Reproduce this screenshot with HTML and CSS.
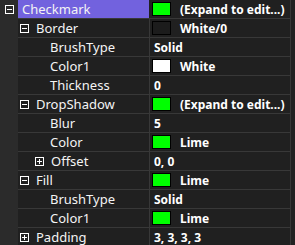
FILE: index.html
```html
<!DOCTYPE html>
<html>
<head>
<meta charset="utf-8">
<link rel="stylesheet" href="styles.css">
</head>
<body>
<div class="grid">
  <div class="gutter">
    <span class="gtoggle"><svg width="9" height="9" viewBox="0 0 9 9"><rect x="0.5" y="0.5" width="8" height="8" fill="none" stroke="#fff"/><path d="M2 4.5h5" stroke="#fff"/></svg></span>
  </div>
  <div class="rows">
    <div class="row head"><div class="name l0">Checkmark</div><div class="val"><span class="sw lime"></span>(Expand to edit...)</div></div>
    <div class="row"><div class="name l1"><span class="tg"><svg width="9" height="9" viewBox="0 0 9 9"><rect x="0.5" y="0.5" width="8" height="8" fill="none" stroke="#fff"/><path d="M2 4.5h5" stroke="#fff"/></svg></span>Border</div><div class="val"><span class="sw dark"></span>White/0</div></div>
    <div class="row"><div class="name l2">BrushType</div><div class="val">Solid</div></div>
    <div class="row"><div class="name l2">Color1</div><div class="val"><span class="sw white"></span>White</div></div>
    <div class="row"><div class="name l2">Thickness</div><div class="val">0</div></div>
    <div class="row"><div class="name l1"><span class="tg"><svg width="9" height="9" viewBox="0 0 9 9"><rect x="0.5" y="0.5" width="8" height="8" fill="none" stroke="#fff"/><path d="M2 4.5h5" stroke="#fff"/></svg></span>DropShadow</div><div class="val"><span class="sw lime"></span>(Expand to edit...)</div></div>
    <div class="row"><div class="name l2">Blur</div><div class="val">5</div></div>
    <div class="row"><div class="name l2">Color</div><div class="val"><span class="sw lime"></span>Lime</div></div>
    <div class="row"><div class="name l2b"><span class="tg"><svg width="9" height="9" viewBox="0 0 9 9"><rect x="0.5" y="0.5" width="8" height="8" fill="none" stroke="#fff"/><path d="M2 4.5h5M4.5 2v5" stroke="#fff"/></svg></span>Offset</div><div class="val">0, 0</div></div>
    <div class="row"><div class="name l1"><span class="tg"><svg width="9" height="9" viewBox="0 0 9 9"><rect x="0.5" y="0.5" width="8" height="8" fill="none" stroke="#fff"/><path d="M2 4.5h5" stroke="#fff"/></svg></span>Fill</div><div class="val"><span class="sw lime"></span>Lime</div></div>
    <div class="row"><div class="name l2">BrushType</div><div class="val">Solid</div></div>
    <div class="row"><div class="name l2">Color1</div><div class="val"><span class="sw lime"></span>Lime</div></div>
    <div class="row"><div class="name l1"><span class="tg"><svg width="9" height="9" viewBox="0 0 9 9"><rect x="0.5" y="0.5" width="8" height="8" fill="none" stroke="#fff"/><path d="M2 4.5h5M4.5 2v5" stroke="#fff"/></svg></span>Padding</div><div class="val">3, 3, 3, 3</div></div>
  </div>
  <div class="edge"></div>
</div>
</body>
</html>
```
FILE: styles.css
```css
html, body {
  margin: 0;
  padding: 0;
  background: #202020;
}
body {
  width: 295px;
  height: 245px;
  overflow: hidden;
  font-family: "Noto Sans", "Open Sans", sans-serif;
  font-size: 12px;
  color: #f0f0f0;
}
.grid {
  display: flex;
  height: 245px;
}
.gutter {
  width: 18px;
  flex: none;
  background: #2b2b2b;
}
.gtoggle {
  display: flex;
  height: 18px;
  align-items: center;
  justify-content: center;
  padding-left: 1px;
}
.gtoggle svg, .tg svg { display: block; }
.rows {
  flex: 1;
  display: flex;
  flex-direction: column;
}
.row {
  display: grid;
  grid-template-columns: 132px 1fr;
  height: 18px;
  border-bottom: 1px solid #383838;
  flex: none;
}
.name {
  display: flex;
  align-items: center;
  border-right: 1px solid #383838;
  white-space: nowrap;
  line-height: 18px;
  font-size: 13px;
  color: #f4f4f4;
}
.head .name {
  background: #7262de;
  border-right-color: #202020;
}
.l0 { padding-left: 4px; }
.l1 { padding-left: 2px; }
.l2 { padding-left: 32px; }
.l2b { padding-left: 17px; }
.tg {
  width: 9px;
  height: 9px;
  margin-right: 7px;
}
.val {
  display: flex;
  align-items: center;
  padding-left: 4px;
  font-weight: bold;
  white-space: nowrap;
  color: #ffffff;
}
.sw {
  width: 17px;
  height: 12px;
  border: 1px solid #000;
  margin-left: -2px;
  margin-right: 9px;
  flex: none;
}
.lime { background: #00ff00; }
.white { background: #ffffff; }
.dark { background: #1c1c1c; }
.edge {
  width: 4px;
  flex: none;
  border-left: 1px solid #383838;
  background: #222;
}
```
